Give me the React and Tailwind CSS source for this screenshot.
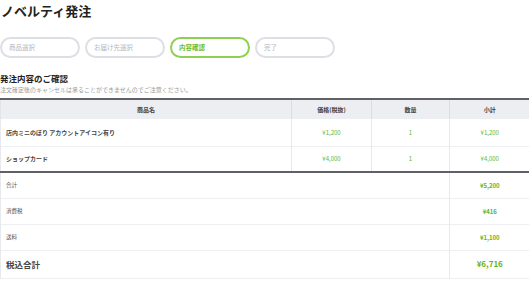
import React from 'react';

const steps = [
  { label: '商品選択', active: false },
  { label: 'お届け先選択', active: false },
  { label: '内容確認', active: true },
  { label: '完了', active: false },
];

const items = [
  { name: '店内ミニのぼり アカウントアイコン有り', price: '¥1,200', qty: 1, subtotal: '¥1,200' },
  { name: 'ショップカード', price: '¥4,000', qty: 1, subtotal: '¥4,000' },
];

const summary = [
  { label: '合計', value: '¥5,200' },
  { label: '消費税', value: '¥416' },
  { label: '送料', value: '¥1,100' },
];

export default function App() {
  return (
    <div
      className="w-[529px] h-[283px] overflow-hidden bg-white text-[#333]"
      style={{ fontFamily: '"Noto Sans CJK JP", "Noto Sans", sans-serif' }}
    >
      {/* Page title */}
      <h1 className="pt-[1px] pl-[1px] text-[13px] leading-[20px] font-bold text-[#222]">ノベルティ発注</h1>

      {/* Steps */}
      <div className="mt-[16px] flex gap-[5px]">
        {steps.map((s) => (
          <div
            key={s.label}
            className={
              s.active
                ? 'w-[80px] h-[21px] rounded-full border-2 border-[#8fcf52] flex items-center pl-[7px] text-[6.5px] font-bold text-[#6cbb2c]'
                : 'w-[80px] h-[21px] rounded-full border-2 border-[#dedfe4] flex items-center pl-[7px] text-[6.5px] text-[#b4b6bc]'
            }
          >
            {s.label}
          </div>
        ))}
      </div>

      {/* Section heading */}
      <h2 className="mt-[14px] text-[8.5px] leading-[12px] font-bold text-[#222]">発注内容のご確認</h2>
      <p className="mt-[2px] text-[6px] leading-[8px] text-[#9a9a9a]">
        注文確定後のキャンセルは承ることができませんのでご注意ください。
      </p>

      {/* Order table */}
      <table className="mt-[4px] w-[529px] table-fixed border-collapse border-t-2 border-t-[#5f6166]">
        <colgroup>
          <col className="w-[291px]" />
          <col className="w-[80px]" />
          <col className="w-[78px]" />
          <col className="w-[80px]" />
        </colgroup>
        <thead>
          <tr className="h-[20px] bg-[#eceef2] text-[6px] font-bold text-[#444]">
            <th className="border-l border-[#e3e4e8] font-bold">商品名</th>
            <th className="border-l border-[#dcdde2] font-bold">価格(税抜)</th>
            <th className="border-l border-[#dcdde2] font-bold">数量</th>
            <th className="border-l border-[#dcdde2] font-bold">小計</th>
          </tr>
        </thead>
        <tbody>
          {items.map((it, i) => (
            <tr
              key={it.name}
              className={
                i === items.length - 1
                  ? 'h-[26px] border-b-2 border-b-[#5f6166] text-[6px]'
                  : 'h-[27px] border-b border-b-[#eeeff2] text-[6px]'
              }
            >
              <td className="border-l border-[#e8e9ec] pl-[5px] font-bold text-[#444]">{it.name}</td>
              <td className="border-l border-[#e8e9ec] text-center text-[#62b52a]">{it.price}</td>
              <td className="border-l border-[#e8e9ec] text-center text-[#62b52a]">{it.qty}</td>
              <td className="border-l border-[#e8e9ec] text-center text-[#62b52a]">{it.subtotal}</td>
            </tr>
          ))}
          {summary.map((r) => (
            <tr key={r.label} className="h-[26px] border-b border-b-[#eeeff2]">
              <td colSpan={3} className="border-l border-[#e8e9ec] pl-[5px] text-[5.5px] text-[#555]">{r.label}</td>
              <td className="border-l border-[#e8e9ec] text-center text-[6px] font-bold text-[#5db52a]">{r.value}</td>
            </tr>
          ))}
          <tr className="h-[28px] border-b border-b-[#eeeff2]">
            <td colSpan={3} className="border-l border-[#e8e9ec] pl-[5px] text-[8.5px] font-bold text-[#444]">税込合計</td>
            <td className="border-l border-[#e8e9ec] text-center text-[8px] font-bold text-[#5db52a]">¥6,716</td>
          </tr>
        </tbody>
      </table>
    </div>
  );
}
